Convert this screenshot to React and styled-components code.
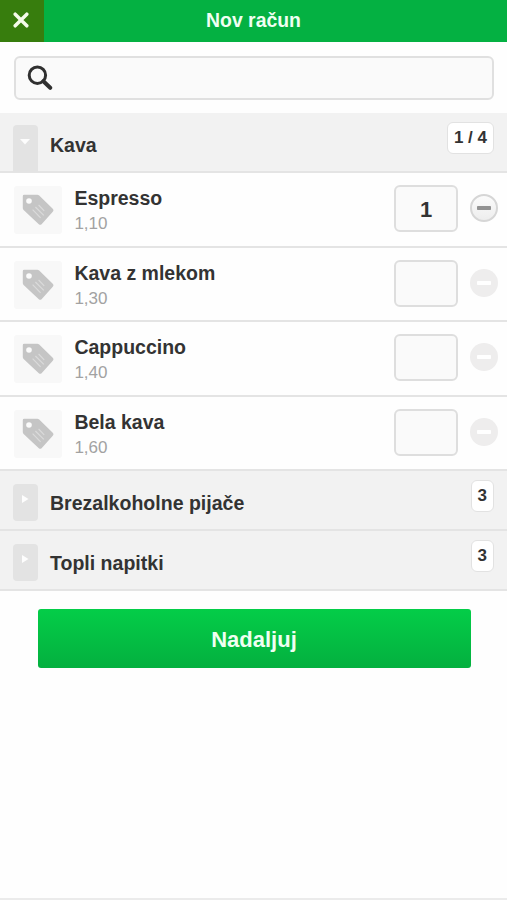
import React from "react";
import styled, { createGlobalStyle, css } from "styled-components";

const items = [
  { name: "Espresso", price: "1,10", quantity: 1 },
  { name: "Kava z mlekom", price: "1,30" },
  { name: "Cappuccino", price: "1,40" },
  { name: "Bela kava", price: "1,60" },
];

const TagIcon = () => (
  <svg width="32" height="32" viewBox="0 0 32 32">
    <path
      d="M2.2.8h13q1.2 0 2 .7L31 15q1 1.2 0 2.4L19.6 30.2q-1.4 1.2-2.8 0L1.6 15.9q-.8-.8-.8-2V2.2q0-1.4 1.4-1.4z"
      fill="#c5c5c5"
    />
    <circle cx="7" cy="7" r="2.8" fill="#fbfbfb" />
    <path
      d="M10.6 15.6l8 8.2M13.4 13l8.4 8.4M16.6 11l5.6 5.8"
      stroke="#dadada"
      strokeWidth="1.2"
    />
  </svg>
);

const Category = ({ title, count, open }) => (
  <CategoryRow>
    <Toggle $open={open}>
      {open ? (
        <svg width="10" height="6" viewBox="0 0 10 6">
          <path d="M0 0h10L5 5.5z" fill="#fdfdfd" />
        </svg>
      ) : (
        <svg width="7" height="8" viewBox="0 0 7 8">
          <path d="M0 0l6.5 4L0 8z" fill="#fdfdfd" />
        </svg>
      )}
    </Toggle>
    <CategoryTitle>{title}</CategoryTitle>
    <Badge>{count}</Badge>
  </CategoryRow>
);

const Item = ({ name, price, quantity }) => (
  <ItemRow>
    <Thumb>
      <TagIcon />
    </Thumb>
    <Info>
      <Name>{name}</Name>
      <Price>{price}</Price>
    </Info>
    <Quantity>{quantity}</Quantity>
    <Minus $active={Boolean(quantity)}>
      <svg width="16" height="4" viewBox="0 0 16 4">
        <rect
          x="1"
          width="14"
          height="4"
          rx="0.8"
          fill={quantity ? "#929292" : "#fff"}
        />
      </svg>
    </Minus>
  </ItemRow>
);

const App = () => {
  return (
    <Page>
      <GlobalStyle />
      <Header>
        <Close>
          <svg width="16" height="16" viewBox="0 0 16 16">
            <path
              d="M2.2 2.2l11.6 11.6M13.8 2.2L2.2 13.8"
              stroke="#f4fbe9"
              strokeWidth="3.5"
              strokeLinecap="round"
            />
          </svg>
        </Close>
        <Title>Nov račun</Title>
      </Header>
      <Search>
        <svg width="26" height="26" viewBox="0 0 26 26">
          <circle
            cx="10.4"
            cy="10.2"
            r="8.2"
            fill="none"
            stroke="#303030"
            strokeWidth="3"
          />
          <path
            d="M16.4 16.2l6.8 6.6"
            stroke="#303030"
            strokeWidth="4"
            strokeLinecap="round"
          />
        </svg>
      </Search>
      <Category title="Kava" count="1 / 4" open />
      <ItemList>
        {items.map((item) => (
          <Item key={item.name} {...item} />
        ))}
      </ItemList>
      <Category title="Brezalkoholne pijače" count="3" />
      <Category title="Topli napitki" count="3" />
      <Continue>Nadaljuj</Continue>
    </Page>
  );
};

export default App;

const GlobalStyle = createGlobalStyle`
  * {
    box-sizing: border-box;
  }
  body {
    margin: 0;
    background: #fefefe;
    font-family: "Liberation Sans", Arial, sans-serif;
    color: #333;
  }
  svg {
    display: block;
  }
`;

const Page = styled.div`
  display: flex;
  flex-direction: column;
  height: 900px;
  overflow: hidden;
  border-bottom: 2px solid #ebebeb;
`;

const Header = styled.header`
  display: grid;
  grid-template-columns: 43.5px 1fr 43.5px;
  flex: none;
  height: 42px;
  background: #04b142;
`;

const Close = styled.button`
  display: flex;
  align-items: center;
  padding: 0 0 3px 12.5px;
  border: 0;
  background: #377d0d;
`;

const Title = styled.h1`
  margin: 0;
  font-size: 19.4px;
  line-height: 40px;
  text-align: center;
  color: #f0fff2;
`;

const Search = styled.div`
  display: flex;
  flex: none;
  height: 44px;
  margin: 14px 13px 13px 14px;
  padding: 7px 11px;
  border: 2px solid #e0e0e0;
  border-radius: 6px;
  background: #fafafa;
`;

const CategoryRow = styled.div`
  display: flex;
  flex: none;
  height: 60px;
  padding: 0 13px;
  border-bottom: 2px solid #e4e4e4;
  background: #f2f2f2;
`;

const Toggle = styled.div`
  display: flex;
  justify-content: center;
  width: 24.5px;
  height: 37.5px;
  margin-top: 12.5px;
  padding-top: 11px;
  border-radius: 4px;
  background: #e3e3e3;

  ${({ $open }) =>
    $open &&
    css`
      height: 47px;
      margin-top: 12px;
      padding-top: 14px;
      border-radius: 4px 4px 0 0;
    `}
`;

const CategoryTitle = styled.h2`
  flex: 1;
  margin: 21px 0 0 12.5px;
  font-size: 19.55px;
  line-height: 23px;
`;

const Badge = styled.span`
  height: 32px;
  margin-top: 9px;
  padding: 0 6px;
  border: 1px solid #e2e2e2;
  border-radius: 6px;
  background: #fff;
  font-size: 17px;
  font-weight: bold;
  line-height: 30px;
`;

const ItemList = styled.div`
  display: grid;
  flex: none;
  grid-template-rows: repeat(4, 1fr);
  height: 298px;
`;

const ItemRow = styled.div`
  display: flex;
  padding: 0 9px 0 14px;
  border-bottom: 2px solid #e4e4e4;
`;

const Thumb = styled.div`
  display: grid;
  place-items: center;
  width: 48px;
  height: 48px;
  margin-top: 13px;
  border-radius: 3px;
  background: #f8f8f8;
`;

const Info = styled.div`
  flex: 1;
  margin: 14px 0 0 12.4px;
`;

const Name = styled.div`
  font-size: 19.5px;
  font-weight: bold;
  line-height: 23px;
`;

const Price = styled.div`
  margin-top: 4px;
  font-size: 17px;
  line-height: 20px;
  color: #a2a2a2;
`;

const Quantity = styled.div`
  width: 64px;
  height: 47px;
  margin-top: 12px;
  border: 2px solid #dedede;
  border-radius: 6px;
  background: #fafafa;
  font-size: 22px;
  font-weight: bold;
  line-height: 45px;
  text-align: center;
`;

const Minus = styled.button`
  display: grid;
  place-items: center;
  width: 28px;
  height: 28px;
  margin: 21px 0 0 12px;
  padding: 0;
  border: 0;
  border-radius: 50%;
  background: #eeeded;

  ${({ $active }) =>
    $active &&
    css`
      border: 2px solid #d6d6d6;
      background: linear-gradient(#fbfbfb, #ededed);
    `}
`;

const Continue = styled.button`
  flex: none;
  height: 59px;
  margin: 18px 36.5px 0 37.5px;
  padding: 3px 0 0;
  border: 0;
  border-radius: 3px;
  background: linear-gradient(#04cd48, #04b03f);
  color: #effff1;
  font-family: inherit;
  font-size: 22px;
  font-weight: bold;
`;
